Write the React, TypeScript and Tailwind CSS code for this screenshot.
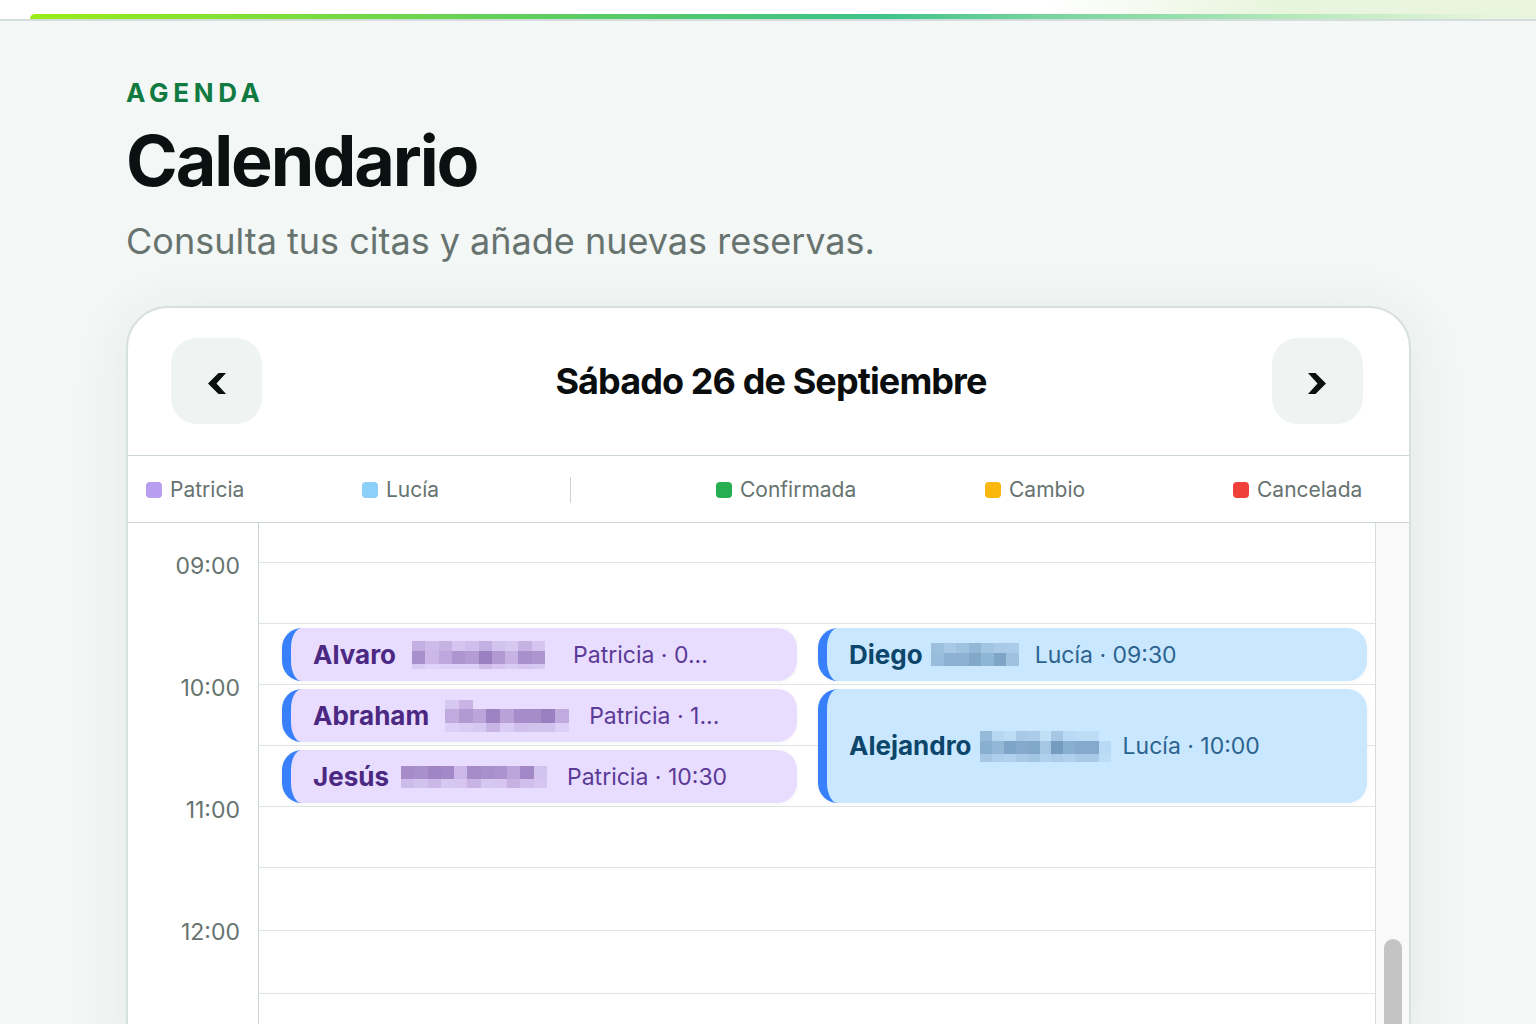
const hours = ["09:00", "10:00", "11:00", "12:00"];

const staff = [
  { name: "Patricia", swatch: "bg-[#b89df0]" },
  { name: "Lucía", swatch: "bg-[#8ad0f8]" },
];

const statuses = [
  { name: "Confirmada", swatch: "bg-[#27ae52]" },
  { name: "Cambio", swatch: "bg-[#fbb80c]" },
  { name: "Cancelada", swatch: "bg-[#f0403a]" },
];

const slots = [
  "row-start-1",
  "row-start-2",
  "row-start-3",
  "row-start-4",
  "row-start-5",
  "row-start-6",
  "row-start-7",
  "row-start-8",
  "row-start-9",
];

type Band = { height: number; cells: number[] };

type Appointment = {
  name: string;
  detail: string;
  place: string;
  tone: "violet" | "sky";
  spacing: string;
  width: number;
  bands: Band[];
};

const tones = {
  violet: { box: "bg-[#e8dcff]", name: "text-[#4b2882]", detail: "text-[#5b3a96]", mask: "#633c94" },
  sky: { box: "bg-[#c9e8ff]", name: "text-[#0c466b]", detail: "text-[#2c638f]", mask: "#33608f" },
};

const appointments: Appointment[] = [
  {
    name: "Alvaro",
    detail: "Patricia · 0...",
    place: "col-start-2 row-start-3",
    tone: "violet",
    spacing: "ml-4 mr-7",
    width: 133,
    bands: [
      { height: 10, cells: [28, 20, 26, 14, 18, 28, 16, 12, 26, 14] },
      { height: 13, cells: [48, 22, 32, 44, 40, 58, 42, 26, 48, 44] },
      { height: 5, cells: [10, 6, 8, 8, 8, 20, 14, 10, 14, 12] },
    ],
  },
  {
    name: "Abraham",
    detail: "Patricia · 1...",
    place: "col-start-2 row-start-4",
    tone: "violet",
    spacing: "ml-4 mr-5",
    width: 124,
    bands: [
      { height: 9, cells: [12, 24, 0, 0, 0, 0, 0, 0, 0] },
      { height: 14, cells: [30, 42, 34, 56, 36, 50, 50, 58, 30] },
      { height: 9, cells: [8, 10, 12, 24, 10, 18, 16, 16, 8] },
    ],
  },
  {
    name: "Jesús",
    detail: "Patricia · 10:30",
    place: "col-start-2 row-start-5",
    tone: "violet",
    spacing: "ml-3 mr-5",
    width: 146,
    bands: [
      { height: 13, cells: [50, 48, 54, 52, 22, 50, 48, 46, 34, 52, 16] },
      { height: 9, cells: [20, 16, 22, 12, 14, 24, 12, 14, 26, 18, 14] },
    ],
  },
  {
    name: "Diego",
    detail: "Lucía · 09:30",
    place: "col-start-4 row-start-3",
    tone: "sky",
    spacing: "ml-2 mr-4",
    width: 88,
    bands: [
      { height: 10, cells: [30, 22, 28, 36, 26, 22, 20] },
      { height: 13, cells: [32, 40, 40, 48, 38, 50, 28] },
    ],
  },
  {
    name: "Alejandro",
    detail: "Lucía · 10:00",
    place: "col-start-4 row-start-4 row-span-2",
    tone: "sky",
    spacing: "ml-2 mr-3",
    width: 131,
    bands: [
      { height: 10, cells: [34, 12, 8, 22, 20, 6, 24, 10, 8, 8, 0] },
      { height: 13, cells: [42, 36, 50, 46, 48, 24, 56, 42, 46, 46, 10] },
      { height: 8, cells: [24, 18, 16, 22, 26, 16, 20, 16, 22, 22, 8] },
    ],
  },
];

function NameMask({ bands, width, color }: { bands: Band[]; width: number; color: string }) {
  const height = bands.reduce((sum, band) => sum + band.height, 0);
  let top = 0;
  return (
    <svg width={width} height={height} shapeRendering="crispEdges" className="shrink-0" aria-hidden="true">
      {bands.map((band, row) => {
        const y = top;
        top += band.height;
        const step = width / band.cells.length;
        return band.cells.map((strength, i) => (
          <rect
            key={`${row}-${i}`}
            x={i * step}
            y={y}
            width={step}
            height={band.height}
            fill={color}
            opacity={strength / 100}
          />
        ));
      })}
    </svg>
  );
}

function AppointmentCard({ item }: { item: Appointment }) {
  const tone = tones[item.tone];
  return (
    <article
      className={`${item.place} ${tone.box} my-1 flex min-w-0 items-center overflow-hidden whitespace-nowrap rounded-[20px] border-l-[9px] border-[#3880fb] pl-[22px] shadow-[0_1px_4px_rgba(60,60,90,0.06)]`}
    >
      <strong className={`${tone.name} text-[26px] font-bold leading-8`}>{item.name}</strong>
      <span className={`${item.spacing} flex`}>
        <NameMask bands={item.bands} width={item.width} color={tone.mask} />
      </span>
      <span className={`${tone.detail} text-[23px] leading-8`}>{item.detail}</span>
    </article>
  );
}

function LegendItem({ name, swatch }: { name: string; swatch: string }) {
  return (
    <li className="flex items-center gap-2">
      <span className={`${swatch} size-4 shrink-0 rounded`} />
      {name}
    </li>
  );
}

function ArrowButton({ direction }: { direction: "prev" | "next" }) {
  return (
    <button
      type="button"
      aria-label={direction === "prev" ? "Día anterior" : "Día siguiente"}
      className="flex h-[86px] w-[91px] shrink-0 items-center justify-center rounded-[26px] bg-[#eff4f2] pt-1 text-[#0a0f10]"
    >
      <svg width="18" height="21" viewBox="0 0 18 21" fill="currentColor" aria-hidden="true">
        {direction === "prev" ? (
          <path d="M0 10.5 10.5 0H18L8.5 10.5 18 21H10.5Z" />
        ) : (
          <path d="M18 10.5 7.5 0H0L9.5 10.5 0 21H7.5Z" />
        )}
      </svg>
    </button>
  );
}

export default function App() {
  return (
    <div className="flex h-screen flex-col overflow-hidden bg-[#f3f7f5] font-['Inter',sans-serif]">
      <header className="shrink-0 border-b-2 border-[#d3dddb] bg-linear-to-r from-white from-68% via-[#e8f5dd] via-83% to-[#eaf5e0] pl-[30px] pt-[14px]">
        <div className="h-[5px] rounded-tl-[5px] bg-[linear-gradient(90deg,#9aec18_0%,#62cf5c_32%,#3ec28a_56%,#76d39e_67%,#b5e8bb_84%,rgba(225,244,215,0.3)_97%,transparent_100%)]" />
      </header>

      <main className="shrink-0 pl-[126px] pr-[125px] pt-14">
        <p className="text-[26px] font-bold leading-8 tracking-[0.18em] text-[#107a41]">AGENDA</p>
        <h1 className="mt-3 text-[70px] font-bold leading-[80px] tracking-[-0.03em] text-[#0b1011]">Calendario</h1>
        <p className="mt-4 text-[36px] leading-[48px] text-[#66736f]">Consulta tus citas y añade nuevas reservas.</p>

        <section className="mt-[41px] overflow-hidden rounded-t-[42px] border-2 border-[#d6e0dd] bg-white shadow-[0_8px_60px_rgba(50,80,70,0.08)]">
          <div className="flex items-center justify-between border-b border-[#c9d6d3] pb-[31px] pl-[43px] pr-[46px] pt-[30px]">
            <ArrowButton direction="prev" />
            <h2 className="pl-2 text-[36px] font-bold leading-[48px] tracking-tight text-[#0a0d0e]">
              Sábado 26 de Septiembre
            </h2>
            <ArrowButton direction="next" />
          </div>

          <ul className="grid h-[67px] grid-cols-[216fr_208fr_146fr_269fr_248fr_176fr] items-center border-b border-[#c9d6d3] pl-[18px] pt-0.5 text-[21px] text-[#66736f]">
            {staff.map((entry) => (
              <LegendItem key={entry.name} {...entry} />
            ))}
            <li aria-hidden="true" className="h-[26px] w-px bg-[#c9d4d1]" />
            {statuses.map((entry) => (
              <LegendItem key={entry.name} {...entry} />
            ))}
          </ul>

          <div className="flex">
            <div className="w-[131px] shrink-0 border-r border-[#c9d6d3] pr-[18px] pt-7 text-right text-[23px] leading-[30px] text-[#66736f]">
              {hours.map((hour) => (
                <time key={hour} className="block h-[122px]">
                  {hour}
                </time>
              ))}
            </div>

            <div className="grid min-w-0 flex-1 grid-cols-[23px_minmax(0,515fr)_21px_minmax(0,549fr)_8px] grid-rows-[40px_repeat(5,61px)_repeat(3,63px)]">
              {slots.map((row) => (
                <div key={row} className={`${row} col-span-full col-start-1 border-b border-[#dfe5e3]`} />
              ))}
              {appointments.map((item) => (
                <AppointmentCard key={item.name} item={item} />
              ))}
            </div>

            <div className="flex w-[34px] shrink-0 flex-col border-l border-[#d8dcdb] bg-[#f9f9f9] px-2 pt-[416px]">
              <div className="w-[18px] flex-1 rounded-t-full bg-[#c4c4c4]" />
            </div>
          </div>
        </section>
      </main>
    </div>
  );
}
